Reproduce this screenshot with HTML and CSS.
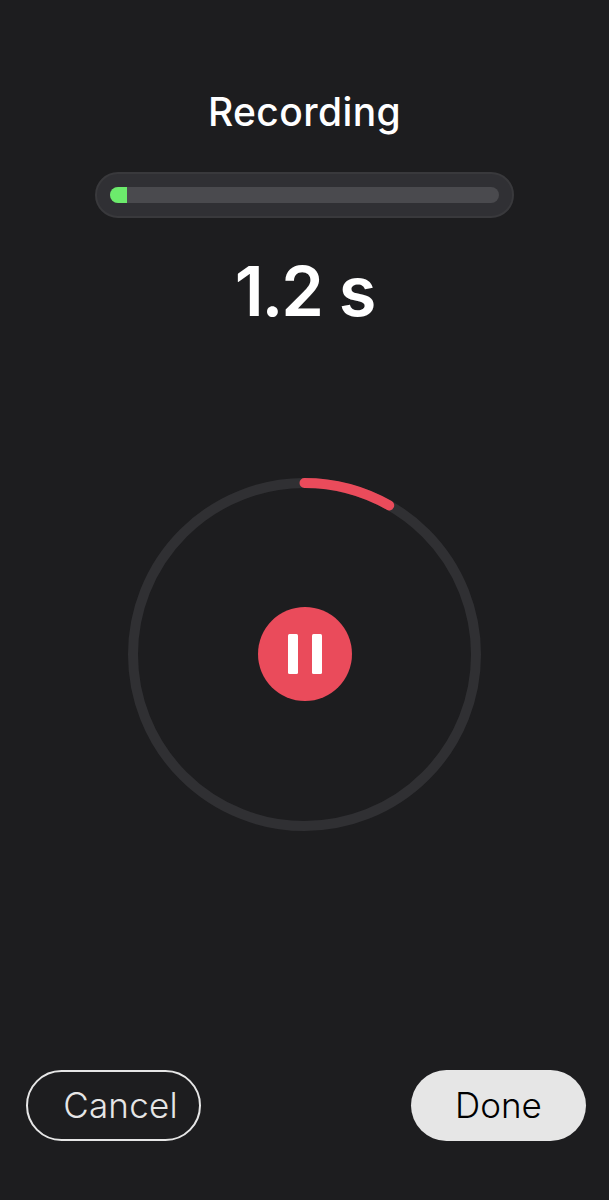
FILE: index.html
```html
<!DOCTYPE html>
<html lang="en">
<head>
    <meta charset="UTF-8">
    <meta name="viewport" content="width=device-width, initial-scale=1.0">
    <title>Recording</title>
    <link rel="stylesheet" href="styles.css">
</head>
<body>
    <div class="header">
        <h1 class="title">Recording</h1>
        <div class="progress">
            <div class="progress-track">
                <div class="progress-fill" style="width: 4.4%"></div>
            </div>
        </div>
        <div class="time">1.2 s</div>
    </div>

    <div class="recorder">
        <svg class="ring" viewBox="0 0 353 353">
            <circle class="ring-track" cx="176.5" cy="176.5" r="171.5" />
            <path class="ring-value" d="M176.5 5 A171.5 171.5 0 0 1 261.2 27.4" />
        </svg>
        <button class="pause" aria-label="Pause">
            <span class="pause-bar"></span>
            <span class="pause-bar"></span>
        </button>
    </div>

    <div class="footer">
        <button class="action cancel">Cancel</button>
        <button class="action done">Done</button>
    </div>
</body>
</html>
```
FILE: styles.css
```css
* {
    box-sizing: border-box;
}

body {
    font-family: Inter, sans-serif;
    margin: 0;
    padding: 84px 23px 59px 26px;
    display: flex;
    flex-direction: column;
    height: 1200px;
    background-color: #1d1d1f;
    color: #fff;
}

.header {
    display: flex;
    flex-direction: column;
    align-items: center;
    height: 394px;
    margin-right: 3px;
}

.title {
    font-size: 39px;
    font-weight: 500;
    letter-spacing: 0.4px;
    line-height: 54px;
    margin: 0;
    padding: 1px 0 33px;
}

.progress {
    width: 419px;
    height: 46px;
    padding: 13px;
    background-color: #303034;
    border: 2px solid #39393c;
    border-radius: 23px;
}

.progress-track {
    height: 16px;
    background-color: #4a4a4e;
    border-radius: 8px;
    overflow: hidden;
}

.progress-fill {
    height: 100%;
    background-color: #6ceb6c;
}

.time {
    font-size: 68.5px;
    font-weight: 600;
    letter-spacing: -2.2px;
    word-spacing: 2px;
    line-height: 84px;
    margin-top: 32px;
}

.recorder {
    display: grid;
    place-items: center;
    width: 353px;
    height: 353px;
    margin-left: 102px;
}

.recorder > * {
    grid-area: 1 / 1;
}

.ring {
    width: 353px;
    height: 353px;
    fill: none;
    stroke-width: 10;
}

.ring-track {
    stroke: #303033;
}

.ring-value {
    stroke: #ea4b5b;
    stroke-linecap: round;
}

.pause {
    display: flex;
    justify-content: center;
    align-items: center;
    gap: 14px;
    width: 94px;
    height: 94px;
    margin-bottom: 1px;
    padding: 0;
    border: none;
    border-radius: 50%;
    background-color: #ea4b5b;
}

.pause-bar {
    width: 10px;
    height: 40px;
    border-radius: 1.5px;
    background-color: #fff;
}

.footer {
    display: flex;
    justify-content: space-between;
    margin-top: auto;
}

.action {
    width: 175px;
    height: 71px;
    font-family: inherit;
    font-size: 35px;
    font-weight: 300;
    line-height: 42px;
    border-radius: 36px;
}

.cancel {
    padding: 0 0 2px 14px;
    border: 2px solid #e6e6e6;
    background-color: transparent;
    color: #e6e6e6;
    letter-spacing: 0.2px;
}

.done {
    padding: 0 0 2px;
    border: none;
    background-color: #e6e6e6;
    color: #000;
}
```
